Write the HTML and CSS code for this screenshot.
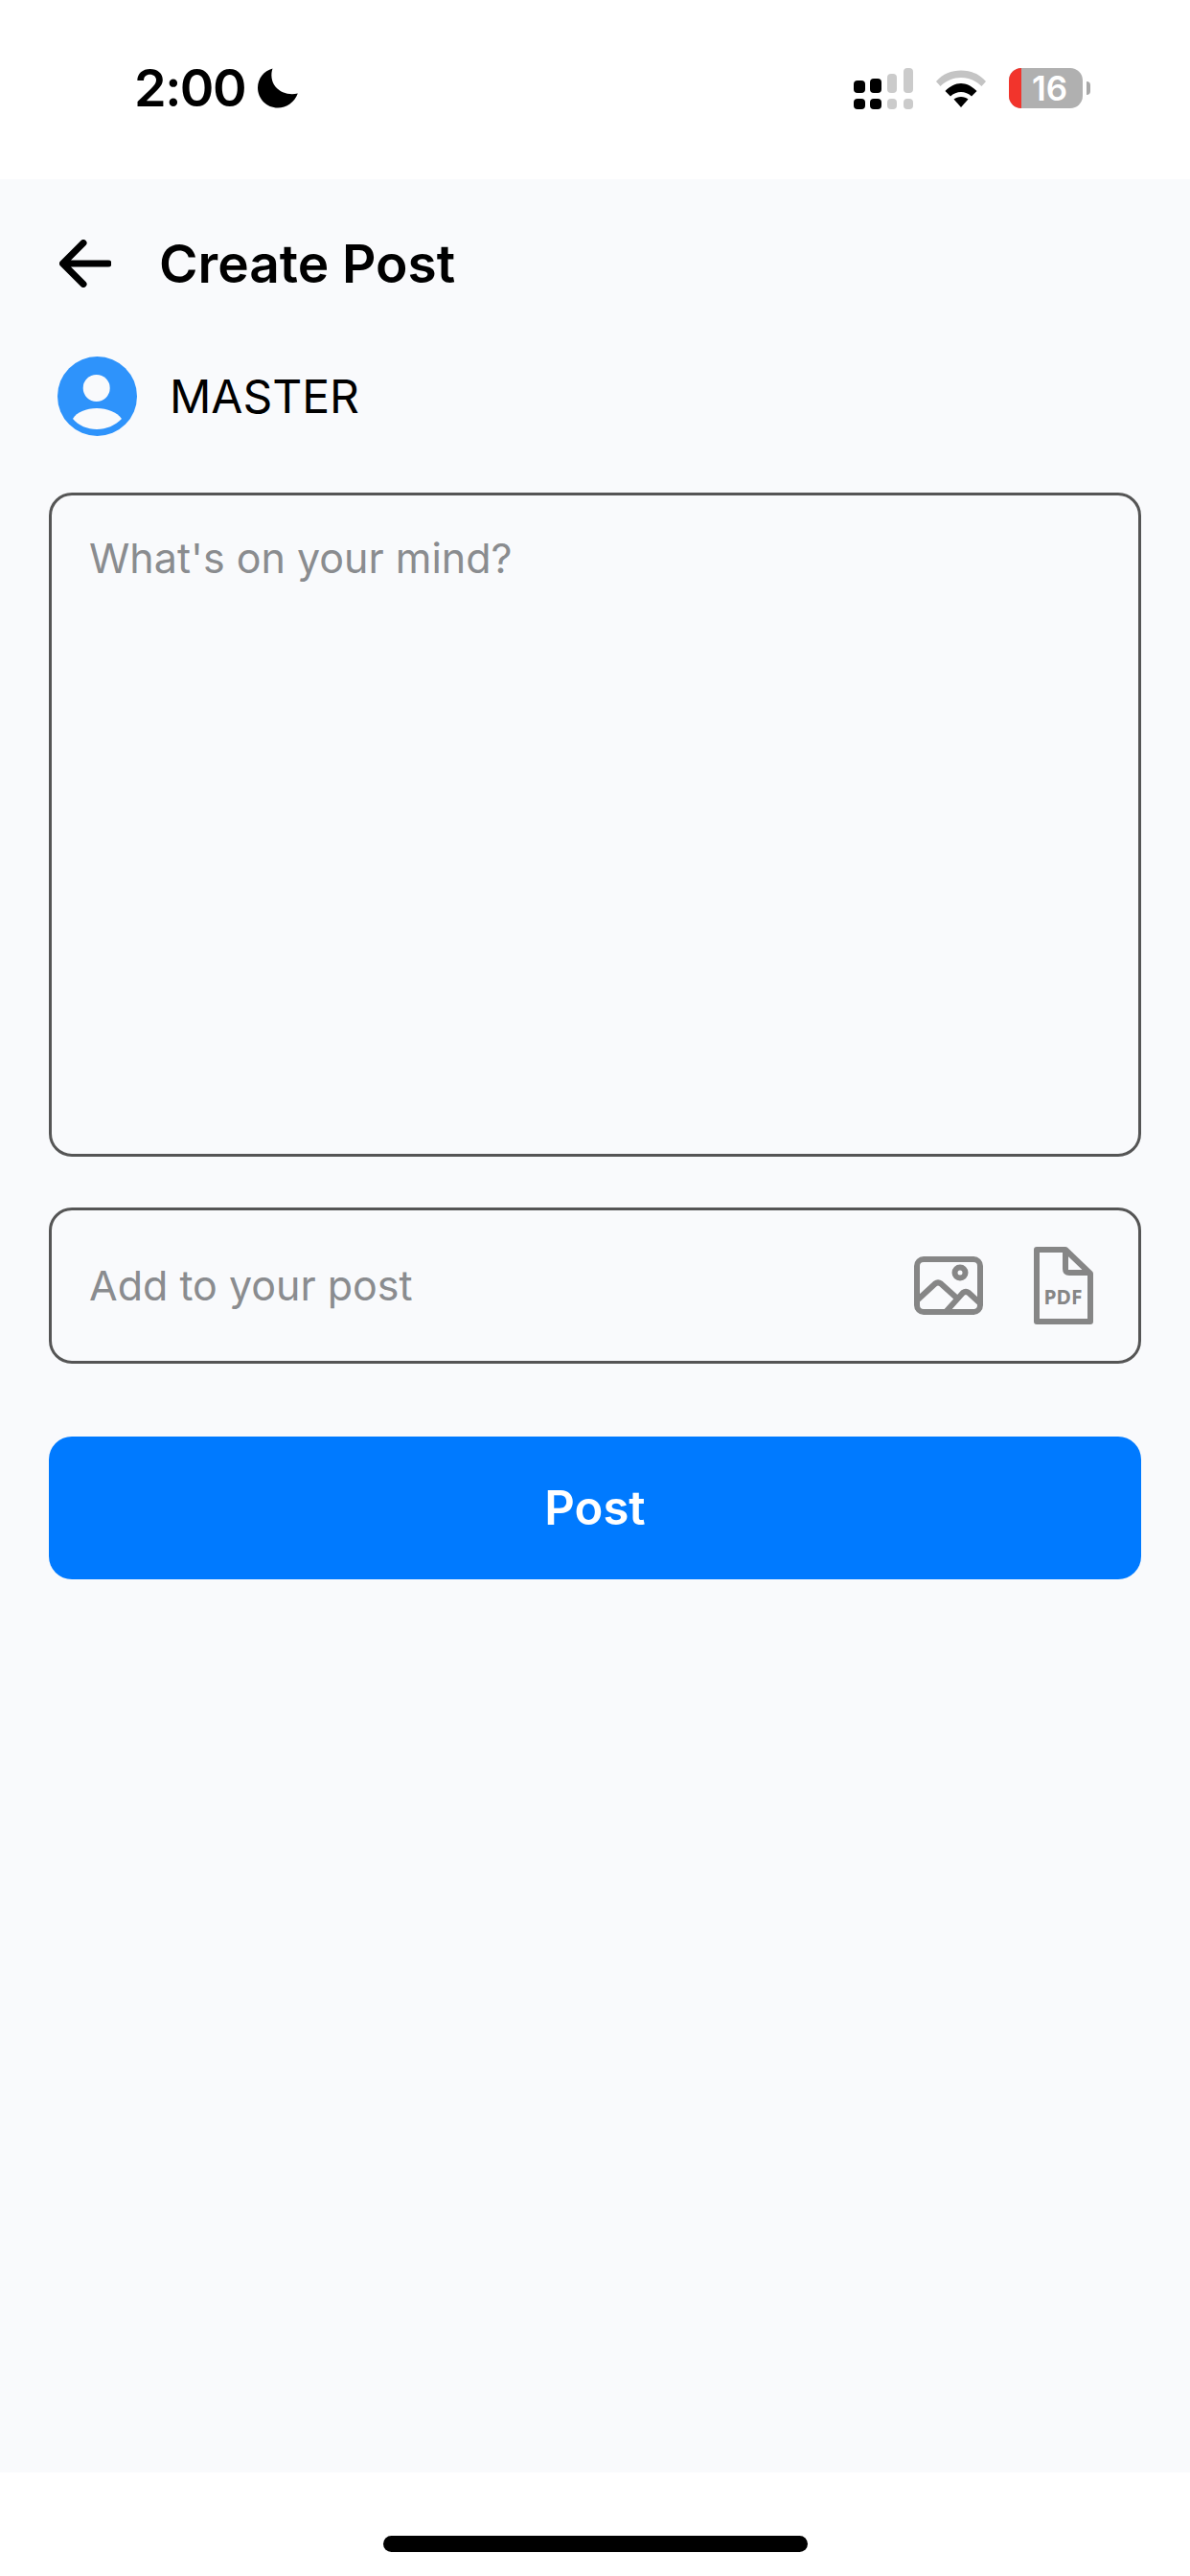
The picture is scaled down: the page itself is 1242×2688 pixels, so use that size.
FILE: index.html
```html
<!DOCTYPE html>
<html lang="en">
<head>
<meta charset="utf-8">
<title>Create Post</title>
<link rel="stylesheet" href="styles.css">
</head>
<body>
<div class="screen">
  <header class="status">
    <div class="status-left">
      <span class="time">2:00</span>
      <svg class="moon" viewBox="0 0 42 42"><path d="M15.5 0.5C13.5 6 14 14 18.5 19.5C24 26 33 28.500 41.800 26.500C38.500 35.500 30 41.500 21 41.500C9.500 41.500 0 32.300 0 20.500C0 11 6.500 2.800 15.500 0.500Z"/></svg>
    </div>
    <div class="status-right">
      <svg class="signal" viewBox="0 0 62 43">
        <rect class="on" x="0" y="13" width="12" height="13" rx="4"/>
        <rect class="on" x="0" y="32" width="12" height="11" rx="4"/>
        <rect class="on" x="17" y="11" width="12" height="15" rx="4"/>
        <rect class="on" x="17" y="32" width="12" height="11" rx="4"/>
        <rect class="off" x="35" y="6" width="10" height="20" rx="4"/>
        <rect class="off" x="35" y="32" width="10" height="11" rx="4"/>
        <rect class="off" x="52" y="0" width="10" height="26" rx="4"/>
        <rect class="off" x="52" y="32" width="10" height="11" rx="4"/>
      </svg>
      <svg class="wifi" viewBox="0 0 52 40">
        <path class="off" d="M0 13C7 5 16 1.500 26 1.500C36 1.500 45 5 52 13L47.500 18C41 11.800 34 9 26 9C18 9 11 11.800 4.500 18Z"/>
        <path class="on" d="M9.500 23C14 18.500 20 15 26 15C32 15 38 18.500 42.500 23L37 28.500C34 25.700 30 24 26 24C22 24 18 25.700 15 28.500Z"/>
        <path class="on" d="M18.500 31.500C20.500 30 23 29 26 29C29 29 31.500 30 33.500 31.500L26 40Z"/>
      </svg>
      <div class="battery">
        <div class="battery-body">
          <span class="battery-low"></span>
          <span class="battery-num">16</span>
        </div>
        <span class="battery-nub"></span>
      </div>
    </div>
  </header>

  <main class="main">
    <div class="title-row">
      <svg class="back" viewBox="0 0 54 50"><path d="M51 25H4M25 3.500L3.500 25L25 46.500"/></svg>
      <h1 class="title">Create Post</h1>
    </div>
    <div class="user-row">
      <svg class="avatar" viewBox="0 0 83 83">
        <circle class="avatar-bg" cx="41.500" cy="41.500" r="41.500"/>
        <circle class="avatar-fg" cx="40.700" cy="33" r="14"/>
        <path class="avatar-fg" d="M16 65C20 58 30 54 41 54C52 54 62 58 67 65C60 72 51 76 41 76C31 76 22 72 16 65Z"/>
      </svg>
      <span class="user-name">MASTER</span>
    </div>
    <div class="field field-text">
      <span class="placeholder">What's on your mind?</span>
    </div>
    <div class="field field-add">
      <span class="placeholder">Add to your post</span>
      <div class="attach">
        <svg class="icon-image" viewBox="0 0 72 61">
          <rect x="3" y="3" width="66" height="55" rx="7"/>
          <circle cx="48" cy="17" r="5.500"/>
          <path d="M3 46L22 28.500C24 27 26 27 28 28.500L43 42M33 58L51 38C53 36.500 55 36.500 57 38L69 49"/>
        </svg>
        <svg class="icon-pdf" viewBox="0 0 62 81">
          <path d="M3 3H33L59 28V78H3Z"/>
          <path d="M33 3V23C33 26 34 27 37 27H59"/>
          <text x="30.500" y="60" text-anchor="middle" class="pdf-label">PDF</text>
        </svg>
      </div>
    </div>
    <button class="post-btn" type="button">Post</button>
  </main>

  <footer class="home">
    <span class="home-bar"></span>
  </footer>
</div>
</body>
</html>
```

FILE: styles.css
```css
* { box-sizing: border-box; }
html, body { margin: 0; padding: 0; background: #fff; }
body { font-family: Inter, "Liberation Sans", sans-serif; color: #000; }

.screen { width: 1242px; height: 2688px; display: flex; flex-direction: column; }

/* status bar */
.status { height: 187px; background: #fff; display: flex; justify-content: space-between; align-items: flex-start; padding: 71px 104px 0 140px; }
.status-left { display: flex; align-items: center; gap: 13px; height: 42px; }
.time { font-size: 54px; font-weight: 600; line-height: 42px; letter-spacing: -1.5px; }
.moon { width: 42px; height: 42px; fill: #000; }
.status-right { display: flex; align-items: flex-start; }
.signal { width: 62px; height: 43px; }
.signal .on, .wifi .on { fill: #000; }
.signal .off { fill: #cbcbcb; }
.wifi { width: 52px; height: 40px; margin: 1px 0 0 24px; }
.wifi .off { fill: #c4c4c4; }
.battery { display: flex; align-items: center; margin-left: 24px; }
.battery-body { position: relative; width: 77px; height: 42px; border-radius: 13px; background: #b0b0b0; overflow: hidden; display: flex; justify-content: center; align-items: center; }
.battery-low { position: absolute; left: 0; top: 0; bottom: 0; width: 13px; background: #f2342c; }
.battery-num { color: #fff; font-size: 35px; font-weight: 600; line-height: 42px; padding-left: 8px; }
.battery-nub { width: 4px; height: 14px; margin-left: 4px; background: #a8a8a8; border-radius: 0 6px 6px 0; }

/* main */
.main { flex: 1; background: #f9fafc; padding: 63px 51px 0 51px; display: flex; flex-direction: column; }
.title-row { display: flex; align-items: center; gap: 50px; height: 50px; padding-left: 11px; }
.back { width: 54px; height: 50px; fill: none; stroke: #000; stroke-width: 7; stroke-linecap: round; stroke-linejoin: round; flex: none; }
.title { margin: 0; font-size: 55px; font-weight: 600; line-height: 50px; letter-spacing: 0; }
.user-row { display: flex; align-items: center; gap: 34px; margin-top: 72px; padding-left: 9px; height: 83px; }
.avatar { width: 83px; height: 83px; flex: none; }
.avatar-bg { fill: #2e93fb; }
.avatar-fg { fill: #f9fafc; }
.user-name { font-size: 48px; font-weight: 400; line-height: 56px; }

.field { border: 3px solid #555; border-radius: 24px; background: #f9fafc; padding-left: 39px; }
.field-text { height: 693px; margin-top: 59px; padding-top: 39px; }
.field-add { height: 163px; margin-top: 53px; display: flex; align-items: center; justify-content: space-between; padding-right: 47px; }
.field-add .placeholder { margin-bottom: 2px; }
.placeholder { font-size: 43px; line-height: 52px; color: #8a8c8f; display: block; }
.attach { display: flex; align-items: center; gap: 53px; }
.icon-image { width: 72px; height: 61px; fill: none; stroke: #868686; stroke-width: 6; stroke-linecap: round; stroke-linejoin: round; }
.icon-pdf { width: 62px; height: 81px; fill: none; stroke: #868686; stroke-width: 6; stroke-linejoin: round; }
.icon-pdf .pdf-label { fill: #868686; stroke: none; font-family: "Noto Sans", sans-serif; font-size: 21px; font-weight: 700; }

.post-btn { display: block; width: 100%; height: 149px; margin-top: 76px; border: 0; border-radius: 24px; background: #007aff; color: #fff; font-family: inherit; font-size: 49px; font-weight: 600; padding: 0; }

/* home indicator */
.home { height: 108px; background: #fff; display: flex; justify-content: center; padding-top: 66px; }
.home-bar { width: 443px; height: 17px; border-radius: 9px; background: #000; }
```
